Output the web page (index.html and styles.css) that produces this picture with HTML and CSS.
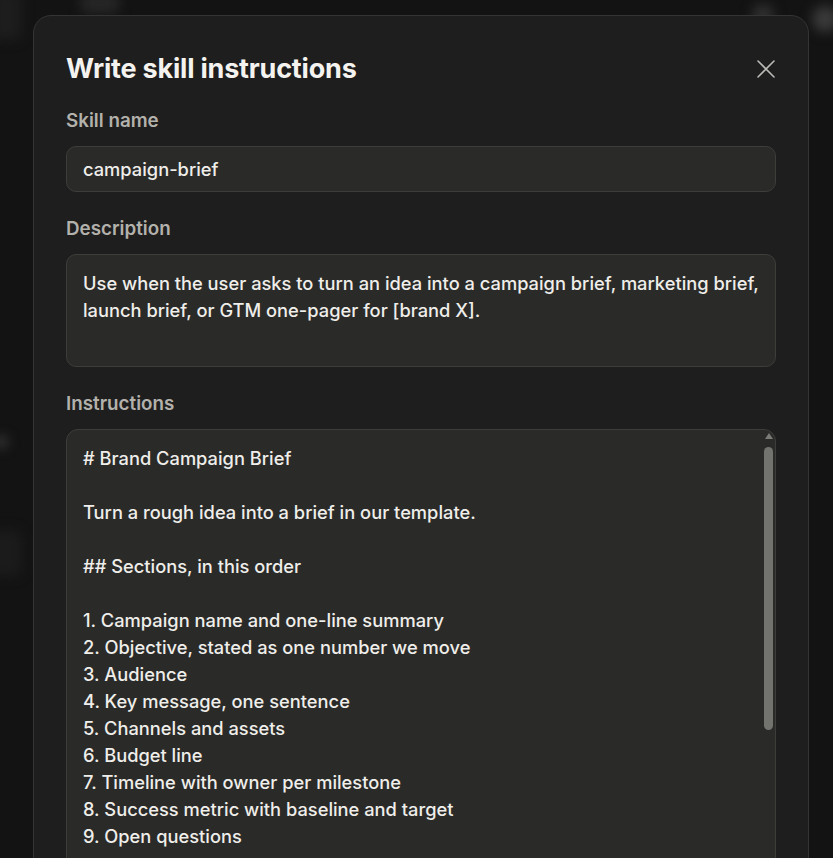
FILE: index.html
```html
<!DOCTYPE html>
<html lang="en">
<head>
<meta charset="utf-8">
<title>Write skill instructions</title>
<link rel="stylesheet" href="styles.css">
</head>
<body>
<div class="backdrop">
  <div class="blob blob-a"></div>
  <div class="blob blob-b"></div>
  <div class="blob blob-c"></div>
  <div class="blob blob-d"></div>
  <div class="blob blob-e"></div>
  <div class="blob blob-f"></div>
</div>
<div class="overlay">
  <div class="modal">
    <div class="modal-header">
      <h1 class="modal-title">Write skill instructions</h1>
      <button class="close-btn" aria-label="Close">
        <svg width="18" height="18" viewBox="0 0 18 18" fill="none">
          <path d="M1 1L17 17M17 1L1 17" stroke="#b9b9b6" stroke-width="1.6" stroke-linecap="round"/>
        </svg>
      </button>
    </div>

    <div class="field">
      <div class="field-label">Skill name</div>
      <div class="input">campaign-brief</div>
    </div>

    <div class="field">
      <div class="field-label">Description</div>
      <div class="textarea desc">Use when the user asks to turn an idea into a campaign brief, marketing brief,
launch brief, or GTM one-pager for [brand X].</div>
    </div>

    <div class="field">
      <div class="field-label">Instructions</div>
      <div class="textarea instructions">
        <div class="instr-text"># Brand Campaign Brief

Turn a rough idea into a brief in our template.

## Sections, in this order

1. Campaign name and one-line summary
2. Objective, stated as one number we move
3. Audience
4. Key message, one sentence
5. Channels and assets
6. Budget line
7. Timeline with owner per milestone
8. Success metric with baseline and target
9. Open questions</div>
        <div class="scrollbar">
          <div class="scroll-arrow"></div>
          <div class="scroll-thumb"></div>
        </div>
      </div>
    </div>
  </div>
</div>
</body>
</html>
```

FILE: styles.css
```css
* {
  box-sizing: border-box;
}

html, body {
  margin: 0;
  padding: 0;
  height: 100%;
  overflow: hidden;
  background: #131313;
  font-family: Inter, "Noto Sans", "Liberation Sans", sans-serif;
}

.backdrop {
  position: fixed;
  inset: 0;
  background: #131313;
}

.blob {
  position: absolute;
  background: #2a2a2a;
  filter: blur(6px);
  border-radius: 8px;
}

.blob-a { left: -10px; top: -10px; width: 32px; height: 50px; background: #1d1d1d; }
.blob-b { left: 80px; top: -8px; width: 40px; height: 22px; background: #262626; border-radius: 10px; }
.blob-c { left: -12px; top: 530px; width: 34px; height: 46px; background: #1b1b1b; }
.blob-d { left: -6px; top: 436px; width: 14px; height: 12px; background: #3a3a3a; border-radius: 50%; }
.blob-e { left: 752px; top: 4px; width: 22px; height: 22px; background: #303030; border-radius: 50%; }
.blob-f { left: 812px; top: 6px; width: 26px; height: 26px; background: #3a3a3a; border-radius: 50%; }

.overlay {
  position: relative;
  padding: 15px 0 0 33px;
}

.modal {
  width: 776px;
  height: 900px;
  background: #1e1e1e;
  border: 1px solid #343434;
  border-radius: 18px;
  padding: 36px 32px 32px 32px;
  display: flex;
  flex-direction: column;
  gap: 25px;
}

.modal-header {
  display: flex;
  align-items: center;
  justify-content: space-between;
  margin-bottom: -2px;
}

.modal-title {
  margin: 0;
  font-size: 27px;
  line-height: 34px;
  font-weight: 700;
  color: #f4f3ef;
  letter-spacing: -0.2px;
}

.close-btn {
  background: none;
  border: none;
  padding: 0;
  margin-right: 1px;
  width: 18px;
  height: 18px;
  display: flex;
  cursor: pointer;
}

.field {
  display: flex;
  flex-direction: column;
  gap: 13px;
}

.field-label {
  font-size: 18.8px;
  line-height: 24px;
  font-weight: 600;
  color: #b3b1ab;
}

.input,
.textarea {
  background: #2a2a28;
  border: 1px solid #3d3d3a;
  border-radius: 10px;
  color: #efeeea;
  font-size: 18.3px;
  line-height: 27px;
  font-weight: 500;
}

.input {
  height: 46px;
  padding: 8.5px 16px;
}

.textarea {
  padding: 15px 16px;
  white-space: pre-line;
}

.desc {
  height: 113px;
}

.instructions {
  position: relative;
  height: 520px;
  overflow: hidden;
  white-space: normal;
  border-radius: 12px;
}

.instr-text {
  white-space: pre-line;
}

.scrollbar {
  position: absolute;
  top: 3px;
  right: 2px;
  width: 9px;
  bottom: 0;
}

.scroll-arrow {
  width: 0;
  height: 0;
  margin: 0 auto;
  border-left: 4.5px solid transparent;
  border-right: 4.5px solid transparent;
  border-bottom: 6px solid #7a7a77;
}

.scroll-thumb {
  margin-top: 8px;
  width: 9px;
  height: 283px;
  border-radius: 5px;
  background: #72726f;
}
```
